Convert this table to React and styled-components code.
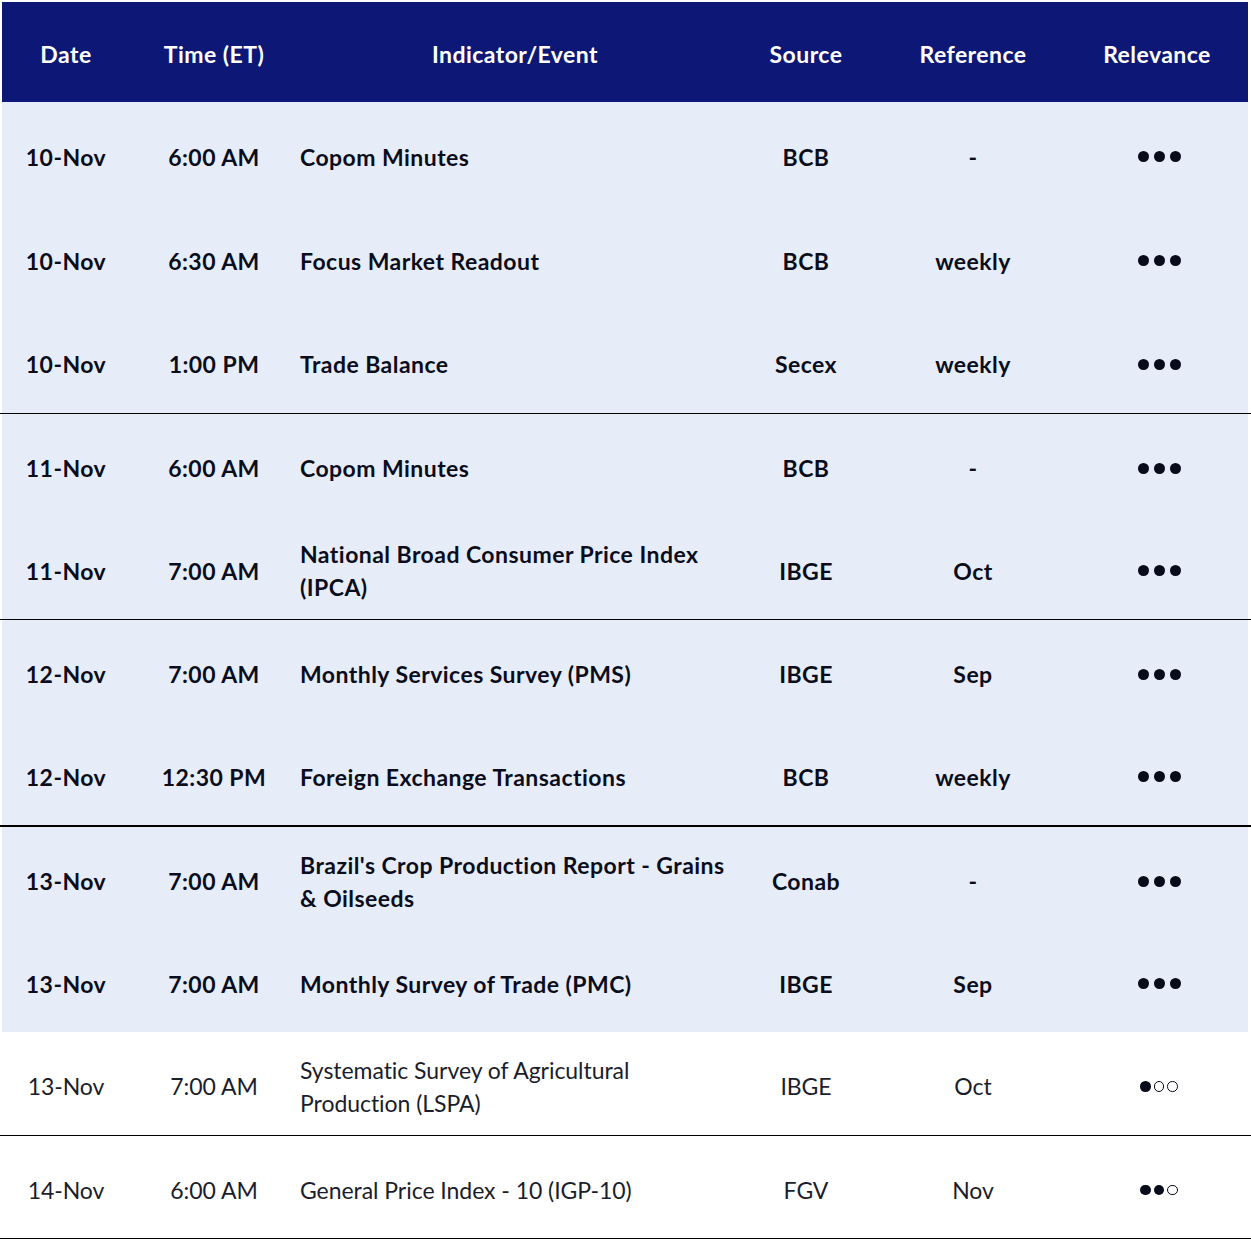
import React from "react";
import styled, { createGlobalStyle } from "styled-components";

const Global = createGlobalStyle`
  html, body { margin: 0; padding: 0; background: #ffffff; }
  body { font-family: "Lato", "Liberation Sans", sans-serif; }
`;

const COLS = "128px 168px 434px 148px 186px 1fr";

const Table = styled.div`
  width: 1251px;
  padding-top: 2px;
  color: #0b0d1c;
`;

const Header = styled.div`
  display: grid;
  grid-template-columns: ${COLS};
  height: 100px;
  margin: 0 3px 0 2px;
  background: #0d1876;
  color: #ffffff;
  font-weight: 700;
  font-size: 23px;
  letter-spacing: 0.45px;
  align-items: center;
  text-align: center;
`;

const HeadCell = styled.div`
  padding-top: 3px;
`;

const Group = styled.div`
  border-bottom: ${(p) => p.$line || "none"};
  background: ${(p) =>
    p.$light
      ? "linear-gradient(#e7edf8,#e7edf8) 2px 0 / 1246px 100% no-repeat"
      : "transparent"};
`;

const Row = styled.div`
  box-sizing: border-box;
  display: grid;
  grid-template-columns: ${COLS};
  height: ${(p) => p.$h}px;
  padding-top: 7px;
  margin: 0 3px 0 2px;
  align-items: center;
  font-size: 23px;
  letter-spacing: ${(p) => (p.$bold ? "0.45px" : "-0.05px")};
  font-weight: ${(p) => (p.$bold ? 700 : 400)};
  color: ${(p) => (p.$bold ? "#0b0d1c" : "#1b1d2a")};
`;

const Cell = styled.div`
  text-align: center;
  line-height: 33px;
`;

const EventCell = styled.div`
  text-align: left;
  padding-left: 2px;
  line-height: 33px;
`;

const Dots = styled.div`
  display: flex;
  justify-content: center;
  align-items: center;
  gap: ${(p) => (p.$bold ? 5 : 3)}px;
  padding-left: 4px;
  margin-top: -1px;
`;

const Dot = styled.span`
  box-sizing: border-box;
  width: ${(p) => (p.$bold ? 11 : 10.5)}px;
  height: ${(p) => (p.$bold ? 11 : 10.5)}px;
  border-radius: 50%;
  background: ${(p) => (p.$on ? "#070b1a" : "transparent")};
  border: ${(p) => (p.$on ? "none" : "1.5px solid #070b1a")};
`;

const groups = [
  {
    light: true,
    h: 103.7,
    line: "1px solid #000",
    rows: [
      ["10-Nov", "6:00 AM", "Copom Minutes", "BCB", "-", 3],
      ["10-Nov", "6:30 AM", "Focus Market Readout", "BCB", "weekly", 3],
      ["10-Nov", "1:00 PM", "Trade Balance", "Secex", "weekly", 3],
    ],
  },
  {
    light: true,
    h: 102.5,
    line: "1px solid #000",
    rows: [
      ["11-Nov", "6:00 AM", "Copom Minutes", "BCB", "-", 3],
      ["11-Nov", "7:00 AM", ["National Broad Consumer Price Index", "(IPCA)"], "IBGE", "Oct", 3],
    ],
  },
  {
    light: true,
    h: 102.5,
    line: "2px solid #000",
    rows: [
      ["12-Nov", "7:00 AM", "Monthly Services Survey (PMS)", "IBGE", "Sep", 3],
      ["12-Nov", "12:30 PM", "Foreign Exchange Transactions", "BCB", "weekly", 3],
    ],
  },
  {
    light: true,
    h: 102.5,
    rows: [
      ["13-Nov", "7:00 AM", ["Brazil's Crop Production Report - Grains", "& Oilseeds"], "Conab", "-", 3],
      ["13-Nov", "7:00 AM", "Monthly Survey of Trade (PMC)", "IBGE", "Sep", 3],
    ],
  },
  {
    light: false,
    h: 102.5,
    line: "1.5px solid #000",
    rows: [
      ["13-Nov", "7:00 AM", ["Systematic Survey of Agricultural", "Production (LSPA)"], "IBGE", "Oct", 1],
    ],
  },
  {
    light: false,
    h: 102.5,
    line: "1.5px solid #000",
    rows: [["14-Nov", "6:00 AM", "General Price Index - 10 (IGP-10)", "FGV", "Nov", 2]],
  },
];

function Relevance({ level, bold }) {
  return (
    <Dots $bold={bold}>
      {[0, 1, 2].map((i) => (
        <Dot key={i} $on={i < level} $bold={bold} />
      ))}
    </Dots>
  );
}

export default function App() {
  return (
    <>
      <Global />
      <Table>
        <Header>
          <HeadCell>Date</HeadCell>
          <HeadCell>Time (ET)</HeadCell>
          <HeadCell>Indicator/Event</HeadCell>
          <HeadCell>Source</HeadCell>
          <HeadCell>Reference</HeadCell>
          <HeadCell>Relevance</HeadCell>
        </Header>
        {groups.map((g, gi) => (
          <Group key={gi} $light={g.light} $line={g.line}>
            {g.rows.map((r, ri) => {
              const bold = g.light;
              return (
                <Row key={ri} $bold={bold} $h={g.h}>
                  <Cell>{r[0]}</Cell>
                  <Cell>{r[1]}</Cell>
                  <EventCell>
                    {Array.isArray(r[2])
                      ? r[2].map((t, i) => <div key={i}>{t}</div>)
                      : r[2]}
                  </EventCell>
                  <Cell>{r[3]}</Cell>
                  <Cell>{r[4]}</Cell>
                  <Relevance level={r[5]} bold={bold} />
                </Row>
              );
            })}
          </Group>
        ))}
      </Table>
    </>
  );
}
